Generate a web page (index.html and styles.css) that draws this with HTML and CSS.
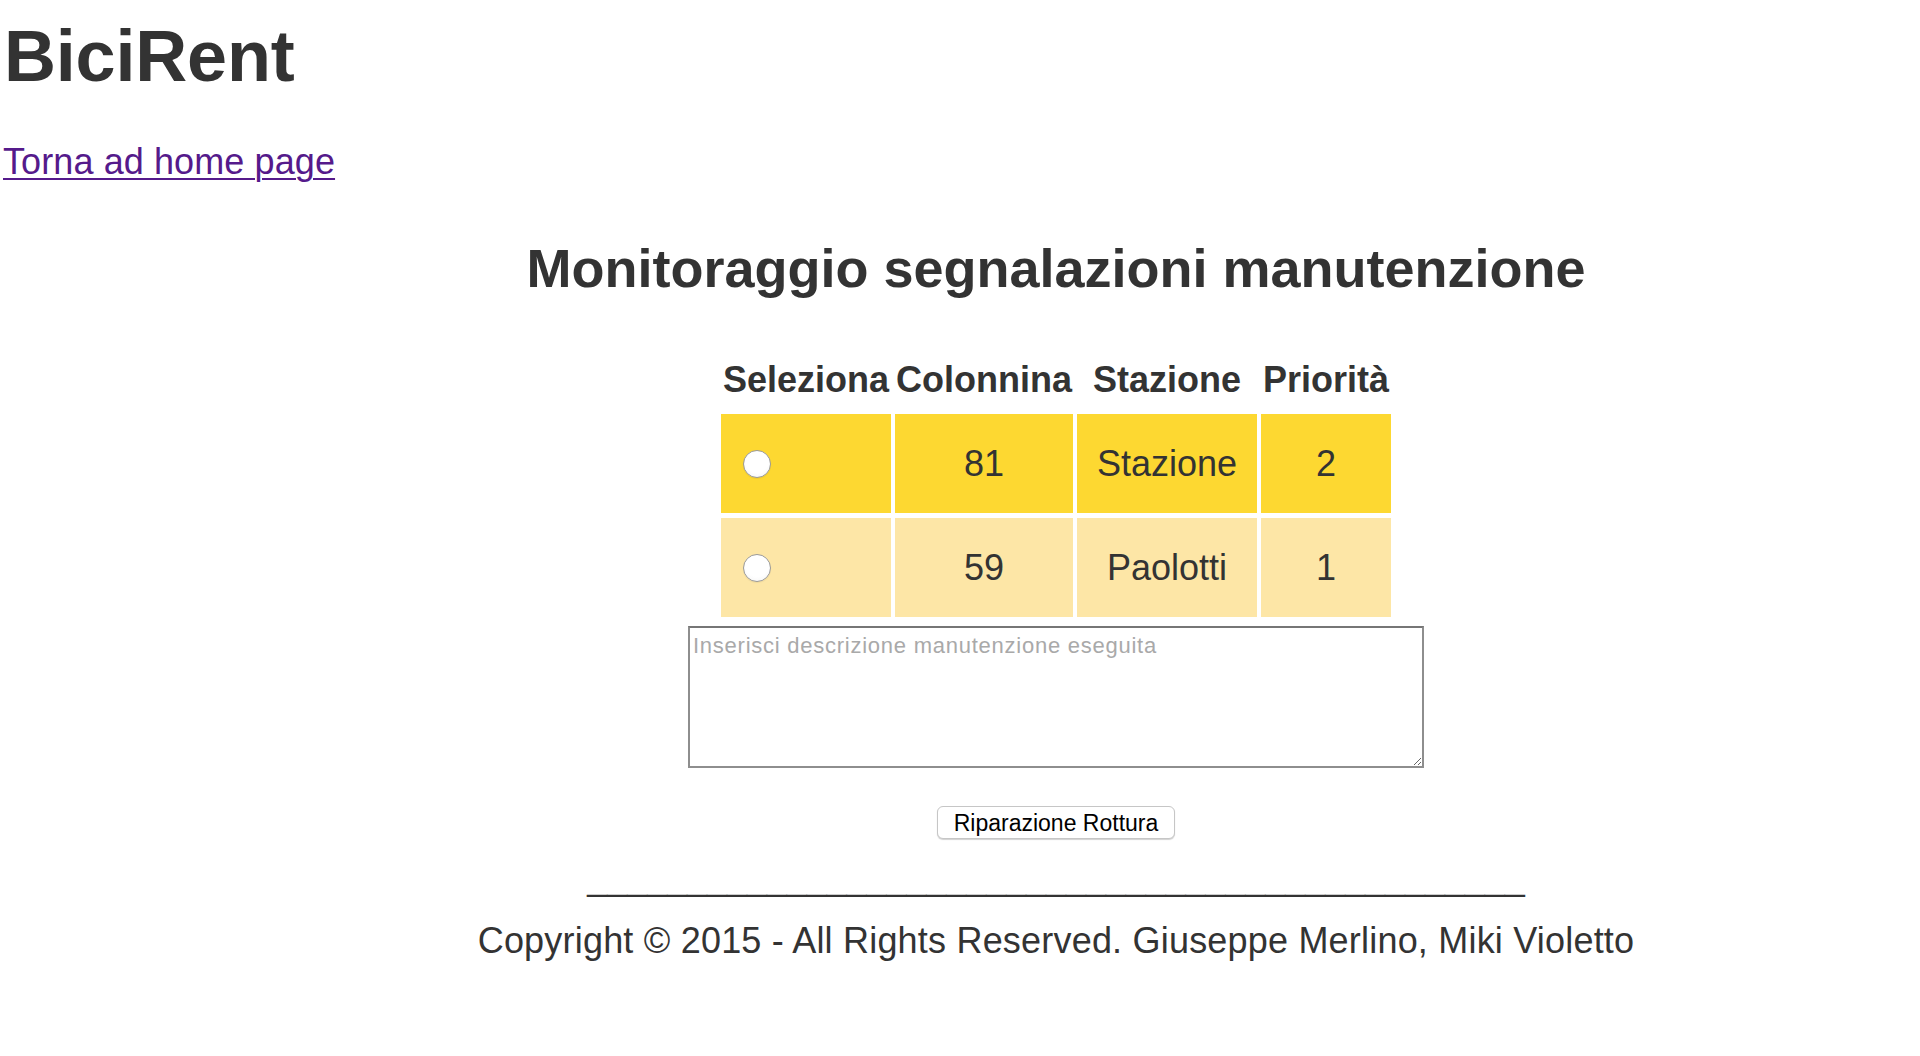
FILE: index.html
```html
<!DOCTYPE html>
<html lang="it">
<head>
<meta charset="utf-8">
<title>BiciRent - Monitoraggio segnalazioni manutenzione</title>
<link rel="stylesheet" href="styles.css">
</head>
<body>
<header class="top">
  <h1 class="brand">BiciRent</h1>
  <p class="back"><a href="#" class="back-link">Torna ad home page</a></p>
</header>
<main class="content">
  <h2 class="page-title">Monitoraggio segnalazioni manutenzione</h2>
  <form class="repair-form">
    <table class="reports">
      <thead>
        <tr>
          <th class="col-sel">Seleziona</th>
          <th class="col-num">Colonnina</th>
          <th class="col-st">Stazione</th>
          <th class="col-pr">Priorità</th>
        </tr>
      </thead>
      <tbody>
        <tr class="row-high">
          <td class="cell-sel"><input type="radio" name="segnalazione" class="radio"></td>
          <td>81</td>
          <td>Stazione</td>
          <td>2</td>
        </tr>
        <tr class="row-low">
          <td class="cell-sel"><input type="radio" name="segnalazione" class="radio"></td>
          <td>59</td>
          <td>Paolotti</td>
          <td>1</td>
        </tr>
      </tbody>
    </table>
    <textarea class="desc" placeholder="Inserisci descrizione manutenzione eseguita"></textarea>
    <button class="btn" type="button">Riparazione Rottura</button>
  </form>
  <footer class="foot">
    <p class="rule">_______________________________________________</p>
    <p class="copy">Copyright © 2015 - All Rights Reserved. Giuseppe Merlino, Miki Violetto</p>
  </footer>
</main>
</body>
</html>
```

FILE: styles.css
```css
html, body {
  margin: 0;
  padding: 0;
  background: #ffffff;
}

body {
  font-family: "Liberation Sans", Arial, Helvetica, sans-serif;
  color: #333333;
}

.top {
  padding-left: 2px;
}

.brand {
  margin: 16px 0 0;
  padding-left: 2px;
  font-size: 72px;
  line-height: 80px;
  font-weight: bold;
  color: #333333;
  letter-spacing: -0.2px;
}

.back {
  margin: 46px 0 0;
  font-size: 36px;
  line-height: 40px;
  padding-left: 1px;
}

.back-link {
  color: #551a8b;
  letter-spacing: 0.1px;
  text-decoration: underline;
  text-decoration-thickness: 2px;
  text-underline-offset: 4px;
}

.content {
  padding-left: 192px;
  text-align: center;
}

.page-title {
  margin: 56px 0 0;
  font-size: 54px;
  line-height: 60px;
  font-weight: bold;
  color: #333333;
}

.repair-form {
  margin: 0;
}

.reports {
  margin: 57px auto 0;
  width: 678px;
  table-layout: fixed;
  border-collapse: separate;
  border-spacing: 4px 5px;
}

.reports th {
  box-sizing: border-box;
  padding: 0 0 9px;
  font-size: 36px;
  line-height: 40px;
  font-weight: bold;
  text-align: center;
  color: #333333;
  white-space: nowrap;
}

.col-sel { width: 170px; }
.col-num { width: 178px; }
.col-st { width: 180px; }
.col-pr { width: 130px; }

.reports td {
  height: 99px;
  padding: 0;
  font-size: 36px;
  line-height: 40px;
  text-align: center;
  vertical-align: middle;
  color: #333333;
}

.row-high td {
  background: #fdd831;
}

.row-low td {
  background: #fde6a6;
}

.reports td.cell-sel {
  text-align: left;
  padding-left: 22px;
}

.radio {
  -webkit-appearance: none;
  appearance: none;
  display: block;
  box-sizing: border-box;
  width: 28px;
  height: 28px;
  margin: 0;
  border: 1px solid #9a9a9a;
  border-radius: 50%;
  background: radial-gradient(circle at 50% 40%, #ffffff 55%, #f2f2f2 100%);
  box-shadow: 0 1px 1px rgba(0, 0, 0, 0.06);
}

.desc {
  display: block;
  box-sizing: border-box;
  width: 736px;
  height: 142px;
  margin: 4px auto 0;
  padding: 5px 3px;
  border: 2px solid #8e8e8e;
  border-top-color: #767676;
  border-radius: 0;
  font-family: "Liberation Sans", Arial, Helvetica, sans-serif;
  font-size: 22px;
  line-height: 26px;
  letter-spacing: 0.75px;
  color: #333333;
  background: #ffffff;
  resize: both;
}

.desc::placeholder {
  color: #a9a9a9;
}

.btn {
  display: block;
  box-sizing: border-box;
  height: 33px;
  margin: 38px auto 0;
  padding: 2px 16px 0;
  font-family: "Liberation Sans", Arial, Helvetica, sans-serif;
  font-size: 23px;
  line-height: 29px;
  color: #000000;
  background: #ffffff;
  border: 1px solid #c6c6c6;
  border-radius: 6px;
  box-shadow: 0 1px 1px rgba(0, 0, 0, 0.18);
}

.foot {
  margin: 0;
}

.rule {
  margin: 18px 0 0;
  font-size: 36px;
  line-height: 41px;
  color: #333333;
  letter-spacing: -0.08px;
}

.copy {
  margin: 22px 0 0;
  font-size: 36px;
  line-height: 41px;
  color: #333333;
  letter-spacing: 0.2px;
}
```
